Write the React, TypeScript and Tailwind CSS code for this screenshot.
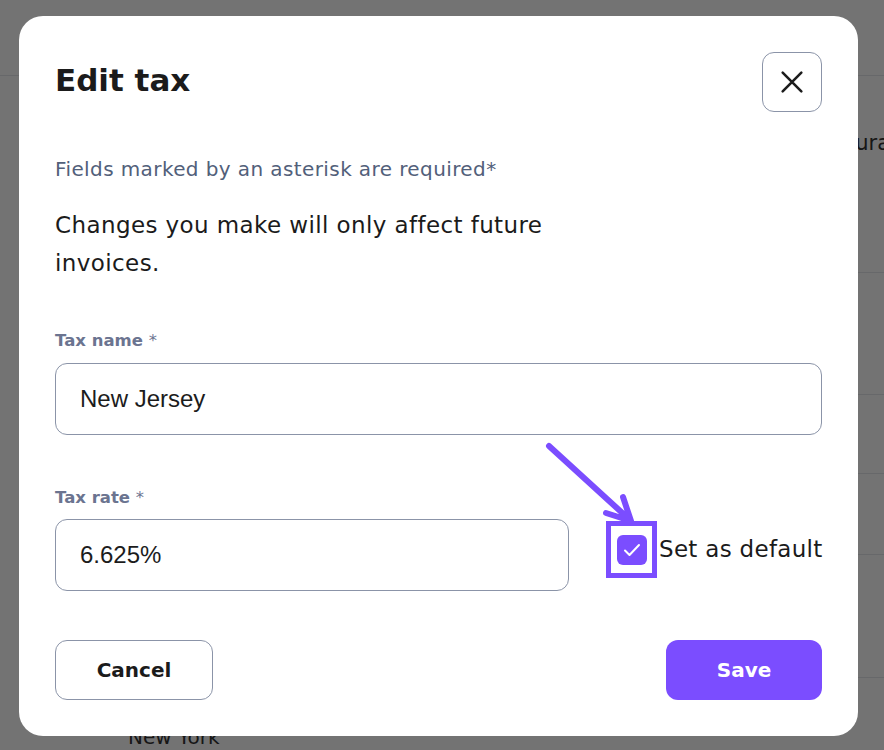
import React from "react";

const sans = "font-['DejaVu_Sans','Noto_Sans',sans-serif]";

const Field: React.FC<{ label: string; value: string; className?: string }> = ({
	label,
	value,
	className,
}) => (
	<div className={className}>
		<div className="text-[16.5px] font-bold text-[#6b7490] leading-none">
			{label} <span className="font-normal">*</span>
		</div>
		<div className="mt-[13px] h-[72px] rounded-xl border border-[#8b94a8] flex items-center px-[24px] font-['Liberation_Sans',Arial,sans-serif] text-[24px] text-[#1c1c1c]">
			{value}
		</div>
	</div>
);

const App: React.FC = () => {
	return (
		<div className={`relative w-[884px] h-[750px] overflow-hidden bg-white ${sans}`}>
			{/* page behind the dialog */}
			<div className="h-[76px] border-b border-[#e4e6ea]" />
			<div className="ml-[100px]">
				<div className="h-[197px] border-b border-[#e4e6ea] flex justify-end pt-[52px] text-[21px] text-[#333]">
					<span className="-mr-[6px]">ura</span>
				</div>
				<div className="h-[122px] border-b border-[#e4e6ea]" />
				<div className="h-[79px] border-b border-[#e4e6ea]" />
				<div className="h-[81px] border-b border-[#e4e6ea]" />
				<div className="h-[123px] border-b border-[#e4e6ea]" />
				<div className="pt-[44px] pl-[28px] text-[20px] text-[#333]">New York</div>
			</div>

			{/* overlay */}
			<div className="absolute inset-0 bg-black/55" />

			{/* dialog */}
			<div className="absolute left-[19px] top-[16px] w-[839px] h-[720px] rounded-[24px] bg-white px-[36px] pt-[36px]">
				<div className="flex items-start justify-between">
					<h2 className="mt-[13px] text-[31px] font-bold text-[#1b1b1b] leading-none">
						Edit tax
					</h2>
					<button className="w-[60px] h-[60px] rounded-xl border border-[#8b94a8] flex items-center justify-center">
						<svg width="28" height="28" viewBox="0 0 24 24" fill="none" stroke="#1c1c1c" strokeWidth="2.2" strokeLinecap="round">
							<path d="M4 4l16 16M20 4L4 20" />
						</svg>
					</button>
				</div>

				<p className="mt-[47px] text-[20px] tracking-[0.4px] text-[#52607a] leading-none">
					Fields marked by an asterisk are required*
				</p>
				<p className="mt-[27px] max-w-[540px] text-[23px] tracking-[0.4px] leading-[38px] text-[#1b1b1b]">
					Changes you make will only affect future invoices.
				</p>

				<Field label="Tax name" value="New Jersey" className="mt-[51px]" />

				<div className="mt-[55px] flex items-end">
					<Field label="Tax rate" value="6.625%" className="w-[514px] shrink-0" />
					<div className="ml-[37px] mb-[13px] flex items-center shrink-0">
						<div className="w-[51px] h-[57px] border-[5px] border-[#7b4dff] flex items-center justify-center">
							<div className="w-[30px] h-[30px] rounded-md bg-[#7b4dff] flex items-center justify-center">
								<svg width="24" height="24" viewBox="0 0 24 24" fill="none" stroke="white" strokeWidth="2" strokeLinecap="round" strokeLinejoin="round">
									<path d="M5 12.5l4.5 4.5L19 7" />
								</svg>
							</div>
						</div>
						<span className="ml-[2px] whitespace-nowrap text-[23px] tracking-[0.3px] text-[#1b1b1b]">Set as default</span>
					</div>
				</div>

				<div className="mt-[49px] flex justify-between">
					<button className="w-[158px] h-[60px] rounded-xl border border-[#8b94a8] text-[20px] font-bold text-[#1b1b1b]">
						Cancel
					</button>
					<button className="w-[156px] h-[60px] rounded-xl bg-[#7b4dff] text-[20px] font-bold text-white">
						Save
					</button>
				</div>
			</div>

			{/* annotation arrow */}
			<svg className="absolute left-0 top-0" width="884" height="750" fill="none" stroke="#7b4dff" strokeWidth="6" strokeLinecap="round" strokeLinejoin="round">
				<path d="M549 446L630 520M623 497L631 521L606 513" />
			</svg>
		</div>
	);
};

export default App;
